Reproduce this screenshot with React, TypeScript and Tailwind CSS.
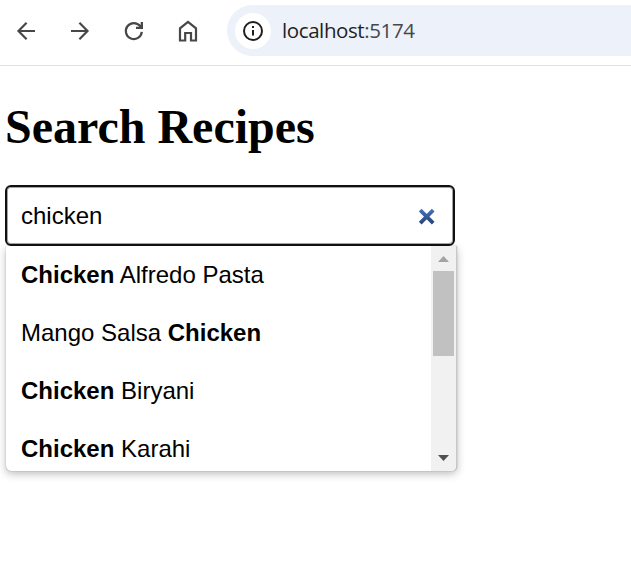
import React, { useState } from "react";

const recipes: { before?: string; after?: string }[] = [
  { after: " Alfredo Pasta" },
  { before: "Mango Salsa " },
  { after: " Biryani" },
  { after: " Karahi" },
];

function Toolbar() {
  return (
    <header className="flex h-[66px] items-start border-b border-[#dedfe0] bg-white text-[#474747]">
      <div className="flex h-[62px] w-[227px] shrink-0 items-center gap-[30px] pl-[14px]">
        <svg width="24" height="24" viewBox="0 0 24 24" fill="none" stroke="currentColor" strokeWidth="2.200">
          <path d="M21 12H5M12.600 3.800L4.500 12l8.100 8.200" />
        </svg>
        <svg width="24" height="24" viewBox="0 0 24 24" fill="none" stroke="currentColor" strokeWidth="2.200">
          <path d="M3 12h16M11.400 3.800l8.100 8.200-8.100 8.200" />
        </svg>
        <svg width="24" height="24" viewBox="0 0 24 24" fill="none" stroke="currentColor" strokeWidth="2.200">
          <path d="M19.800 12.800A8 8 0 1 1 18.200 7.200" />
          <path d="M18.700 3h2.300v7h-7V7.800h3.200l-1-2 1.200-.8 1.300 1.200z" fill="currentColor" stroke="none" />
        </svg>
        <svg width="24" height="24" viewBox="0 0 24 24" fill="none" stroke="currentColor" strokeWidth="2.200">
          <path d="M4 21.500V9.300l8-6.300 8 6.300v12.200h-5v-7.500H9.200v7.500z" />
        </svg>
      </div>
      <div className="mt-[5px] flex h-[51px] flex-1 items-center rounded-l-full bg-[#ecf1fa] pl-2">
        <div className="flex size-9 items-center justify-center rounded-full bg-white text-[#1f1f1f]">
          <svg width="22" height="22" viewBox="0 0 22 22" fill="none" stroke="currentColor" strokeWidth="2">
            <circle cx="11" cy="11" r="9" />
            <path d="M11 10v5.500M11 6v2" />
          </svg>
        </div>
        <div className="ml-[11px] whitespace-nowrap font-['Open_Sans','Noto_Sans',sans-serif] text-[20.500px] tracking-[-0.400px] text-[#1f1f1f]">
          localhost<span className="text-[#474747]">:5174</span>
        </div>
      </div>
    </header>
  );
}

export default function App() {
  const [query, setQuery] = useState("chicken");
  return (
    <div className="h-[579px] w-[631px] overflow-hidden bg-white text-black">
      <Toolbar />
      <main className="pl-[5px]">
        <h1 className="mt-[33px] h-[55px] font-['Liberation_Serif',serif] text-[48px] leading-[55px] font-bold">Search Recipes</h1>
        <div className="mt-[31px] w-[452px] font-['Liberation_Sans',sans-serif] text-[24px] leading-[28px]">
          <div className="relative z-10 flex h-[61px] w-[450px] items-center rounded-[6px] border-2 border-[#101010] bg-white pr-[17px] pl-[14px] shadow-[inset_0_0_0_1px_#a0a5a0]">
            <input
              className="min-w-0 flex-1 bg-transparent outline-none"
              value={query}
              onChange={(e) => setQuery(e.target.value)}
            />
            <button aria-label="Clear" onClick={() => setQuery("")}>
              <svg width="18" height="18" viewBox="0 0 18 18" fill="none">
                <defs>
                  <linearGradient id="clear" x1="0" y1="0" x2="0" y2="18" gradientUnits="userSpaceOnUse">
                    <stop stopColor="#477bc6" />
                    <stop offset="1" stopColor="#293f73" />
                  </linearGradient>
                </defs>
                <path d="M2.200 3.200l13 13M15.200 3.200l-13 13" stroke="url(#clear)" strokeWidth="3.800" />
              </svg>
            </button>
          </div>
          <div className="ml-px flex h-[225px] w-[451px] overflow-hidden rounded-b-[5px] border-r border-[#c8c8c8] bg-white shadow-[0_0_1px_rgba(0,0,0,0.5),0_3px_8px_rgba(0,0,0,0.26)]">
            <ul className="flex-1">
              {recipes.map((r, i) => (
                <li key={i} className="h-[58px] py-[15px] pl-[15px] whitespace-pre">
                  {r.before}
                  <b>Chicken</b>
                  {r.after}
                </li>
              ))}
            </ul>
            <div className="flex w-[25px] flex-col items-center bg-[#f1f1f1]">
              <svg className="shrink-0" width="25" height="25" viewBox="0 0 25 25">
                <path d="M7 16h11l-5.500-6z" fill="#a3a3a3" />
              </svg>
              <div className="h-[85px] w-[21px] bg-[#c1c1c1]" />
              <svg className="mt-auto shrink-0" width="25" height="25" viewBox="0 0 25 25">
                <path d="M7 9h11l-5.500 6z" fill="#505050" />
              </svg>
            </div>
          </div>
        </div>
      </main>
    </div>
  );
}
